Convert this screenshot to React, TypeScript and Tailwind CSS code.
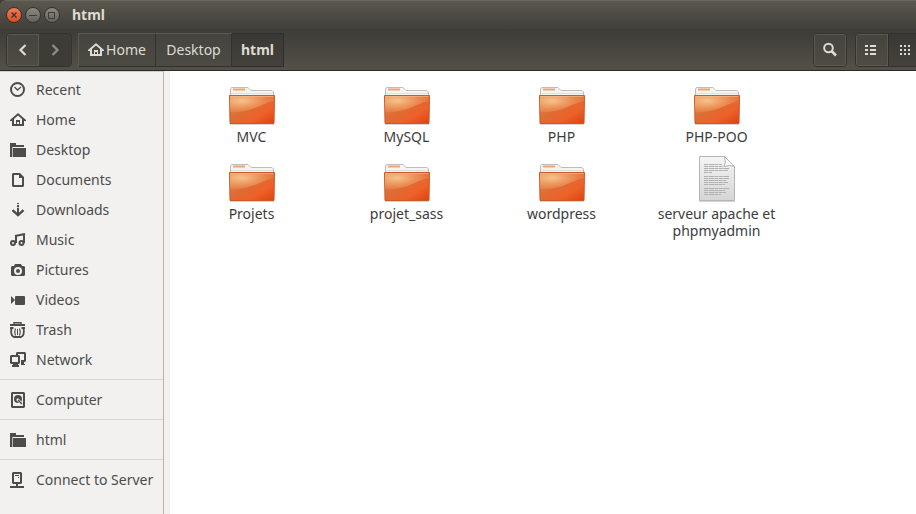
import type { ReactNode } from "react";

function Icon({ children }: { children: ReactNode }) {
  return (
    <svg viewBox="0 0 16 16" className="h-4 w-4 shrink-0" fill="currentColor" aria-hidden="true">
      {children}
    </svg>
  );
}

const homeShape = (
  <path fillRule="evenodd" d="M8 1 0 8v1h2v5h12V9h2V8L8 1Zm0 2.500 4 3.500v5h-2V8H6v4H4V7Zm-1 6.500h2v2H7Z" />
);

const icons = {
  recent: (
    <g fill="none" stroke="currentColor">
      <circle cx="7.500" cy="7.500" r="6.500" strokeWidth="2" />
      <path d="m4.500 5 3 3 3.500-3" strokeWidth="1.300" />
    </g>
  ),
  home: homeShape,
  folder: (
    <>
      <path d="M0 1h6v2h8v2H2v10H0Z" />
      <path d="M3 6h13v9H3Z" />
      <path d="M2 5h1v10H2Z" opacity=".35" />
    </>
  ),
  document: <path fillRule="evenodd" d="M3 1h7l4 4v9l-1 1H3l-1-1V2Zm1 2v10h8V6H9V3Z" />,
  downloads: (
    <>
      <path d="M7 1h2v1H7zM7 3h2v2H7zM7 6h2v7H7z" />
      <path d="M7 5h2v1H7z" opacity=".35" />
      <path d="m2.500 8.200 5.500 5 5.500-5" fill="none" stroke="currentColor" strokeWidth="2.400" />
    </>
  ),
  music: (
    <g fill="none" stroke="currentColor" strokeWidth="2">
      <circle cx="3" cy="11" r="2" />
      <circle cx="11.500" cy="11" r="2" />
      <path d="M6 11V3M14 11V2M5 4l10-2" />
    </g>
  ),
  pictures: (
    <path
      fillRule="evenodd"
      d="M5 2h6l1 2h2l1 1v8l-1 1H2l-1-1V5l1-1h2Zm3 3a4 4 0 1 0 0 8 4 4 0 0 0 0-8Zm0 2a2 2 0 1 1 0 4 2 2 0 0 1 0-4Z"
    />
  ),
  videos: (
    <>
      <path d="M1 4l4 4-4 4Z" />
      <rect x="5" y="4" width="10" height="9" rx="1" />
    </>
  ),
  trash: (
    <g fill="none" stroke="currentColor">
      <path d="M0 3h15" strokeWidth="2" />
      <path d="M4 2V.7h7V2" strokeWidth="1.400" />
      <path d="M1.500 6C1 9 1 14 4 15h7c3-1 3-6 2.500-9M0 6h3.500M11.500 6H15" strokeWidth="1.800" />
      <path d="M5.500 6.500q-1.600 3.500 0 7M9.500 6.500q1.600 3.500 0 7" strokeWidth="1.200" />
      <path d="M7.500 7v6" />
    </g>
  ),
  network: (
    <>
      <path d="M7 0h8l1 1v8l-1 1h-1v2h1v1h-4V8h3V2H8v1H6V1Z" />
      <path fillRule="evenodd" d="M1 3h8l1 1v7l-1 1H8v1h1v2H2v-2h1v-1H1l-1-1V4Zm1 2v5h6V5Z" />
    </>
  ),
  computer: (
    <>
      <path fillRule="evenodd" d="M2 0h12l1 1v14l-1 1H2l-1-1V1Zm1 2v12h10V2Z" />
      <circle cx="8" cy="7" r="4" />
      <path d="m7 7 5 5" stroke="#f2f1f0" strokeWidth="2.500" />
      <path d="m8 8 4 4" stroke="currentColor" strokeWidth="1.500" />
    </>
  ),
  server: (
    <>
      <path fillRule="evenodd" d="M3 0h8l1 1v10l-1 1H8v2h6v2H0v-2h6v-2H3l-1-1V1Zm1 2v8h6V2Z" />
      <path d="M5 3h4v1H5zM8 5h1v1H8z" />
    </>
  ),
};

type Place = { label: string; icon: keyof typeof icons };

const sections: Place[][] = [
  [
    { label: "Recent", icon: "recent" },
    { label: "Home", icon: "home" },
    { label: "Desktop", icon: "folder" },
    { label: "Documents", icon: "document" },
    { label: "Downloads", icon: "downloads" },
    { label: "Music", icon: "music" },
    { label: "Pictures", icon: "pictures" },
    { label: "Videos", icon: "videos" },
    { label: "Trash", icon: "trash" },
    { label: "Network", icon: "network" },
  ],
  [{ label: "Computer", icon: "computer" }],
  [{ label: "html", icon: "folder" }],
  [{ label: "Connect to Server", icon: "server" }],
];

const files = [
  { name: "MVC", folder: true },
  { name: "MySQL", folder: true },
  { name: "PHP", folder: true },
  { name: "PHP-POO", folder: true },
  { name: "Projets", folder: true },
  { name: "projet_sass", folder: true },
  { name: "wordpress", folder: true },
  { name: "serveur apache et phpmyadmin", folder: false },
];

function FolderArt() {
  return (
    <svg viewBox="0 0 48 48" className="h-12 w-12" aria-hidden="true">
      <path d="M2.500 38V11l1-1.500h16.500l3 3h21l1.500 1.500v24Z" fill="#f4f4f3" stroke="#bdbdba" />
      <path d="M5 11.500h12" stroke="#f0a36c" strokeWidth="2" />
      <path d="M3 15.500h42" stroke="#e0e0de" />
      <path d="M1.500 17.500h45l-.5 28H2Z" fill="url(#folder-body)" stroke="#cb5a2a" />
      <path d="M2 18h44v5C34 25 22 36 2 34Z" fill="url(#folder-shine)" />
      <path d="M2.500 18.500h43" stroke="#f7bd93" opacity=".6" />
      <path d="M2 46.500h44" stroke="#777" opacity=".3" />
    </svg>
  );
}

function TextFileArt() {
  return (
    <svg viewBox="0 0 48 48" className="h-12 w-12" aria-hidden="true">
      <path d="M6.500 1.500h25l10 10v34h-35Z" fill="url(#paper)" stroke="#b4b4b4" />
      <path d="M31.500 1.500q2 6-.5 10 6-2 10.500 0Z" fill="#fafafa" stroke="#b2b2b2" />
      <path
        d="M11 9.500h18M11 11.500h19M11 13.500h25M11 15.500h24M11 17.500h8M11 21.500h25M11 23.500h25M11 25.500h22M11 27.500h24M11 29.500h21M11 33.500h25M11 35.500h21M11 37.500h22M11 39.500h17"
        stroke="#b0b0b0"
        strokeDasharray="4 .6 6 .5 3 .6"
      />
      <path d="M6 46.500h36" stroke="#777" opacity=".3" />
    </svg>
  );
}

function ArtGradients() {
  return (
    <svg className="absolute h-0 w-0" aria-hidden="true">
      <defs>
        <linearGradient id="folder-body" x1="0" y1="0" x2="1" y2="1">
          <stop offset="0" stopColor="#dd8a4c" />
          <stop offset=".45" stopColor="#dd6c34" />
          <stop offset=".7" stopColor="#ee6128" />
          <stop offset="1" stopColor="#dc4212" />
        </linearGradient>
        <radialGradient id="folder-shine" cx=".28" cy=".3" r=".75">
          <stop offset="0" stopColor="#ffdca4" stopOpacity=".75" />
          <stop offset="1" stopColor="#ffb27c" stopOpacity=".15" />
        </radialGradient>
        <linearGradient id="paper" x1="0" y1="0" x2="0" y2="1">
          <stop offset="0" stopColor="#f5f5f5" />
          <stop offset="1" stopColor="#d5d5d5" />
        </linearGradient>
      </defs>
    </svg>
  );
}

const windowButton =
  "flex h-4 w-4 items-center justify-center rounded-full border border-[#34332e] text-[#3c3b37]";
const toolGroup = "flex h-[34px] shrink-0 overflow-hidden rounded-[4px] border border-[#33322e]";
const toolButton =
  "flex w-8 items-center justify-center border border-[#5b5a51] bg-linear-to-b from-[#45443e] to-[#4d4b44]";
const crumb =
  "flex items-center border-y border-r border-[#33322e] border-t-[#5b5a51] bg-linear-to-b from-[#45443e] to-[#4b4a43]";

export default function App() {
  return (
    <div className="flex h-screen flex-col overflow-hidden bg-[#3c3b37] font-['Noto_Sans','Open_Sans',sans-serif] text-sm text-[#3c3c3c]">
      <ArtGradients />
      <header className="flex h-[29px] shrink-0 items-center rounded-tl-md border-t border-[#69675d] bg-linear-to-b from-[#5a584e] to-[#403f3a] pl-1.5">
        <div className="flex gap-[3px]">
          <button aria-label="Close" className={`${windowButton} bg-linear-to-b from-[#f47b55] to-[#df4a16]`}>
            <svg viewBox="0 0 8 8" className="h-2 w-2 shrink-0" fill="none" stroke="currentColor" strokeWidth="1.500">
              <path d="m1.500 1.500 5 5m0-5-5 5" />
            </svg>
          </button>
          <button aria-label="Minimize" className={`${windowButton} bg-linear-to-b from-[#8b8981] to-[#65635b]`}>
            <svg viewBox="0 0 8 8" className="h-2 w-2 shrink-0" fill="none" stroke="currentColor">
              <path d="M0 4.500h8" />
            </svg>
          </button>
          <button aria-label="Maximize" className={`${windowButton} bg-linear-to-b from-[#8b8981] to-[#65635b]`}>
            <svg viewBox="0 0 8 8" className="h-2 w-2 shrink-0" fill="none" stroke="currentColor">
              <path d="M.5 1.500h6v6h-6z" />
            </svg>
          </button>
        </div>
        <h1 className="ml-3 text-sm font-bold text-[#dfdbd2]">html</h1>
      </header>

      <div className="flex h-[42px] shrink-0 items-center justify-between overflow-hidden border-b border-[#2c2b27] bg-linear-to-b from-[#3d3c38] to-[#535147] pl-1.5 text-[#dfdbd2]">
        <div className="flex gap-1.5">
          <div className={toolGroup}>
            <button aria-label="Back" className={toolButton}>
              <Icon>
                <path d="M10.500 3 5.500 8l5 5" fill="none" stroke="currentColor" strokeWidth="2.200" />
              </Icon>
            </button>
            <button aria-label="Forward" disabled className="flex w-8 items-center justify-center bg-[#3d3c37] text-[#928f87]">
              <Icon>
                <path d="m5.500 3 5 5-5 5" fill="none" stroke="currentColor" strokeWidth="2.200" />
              </Icon>
            </button>
          </div>
          <nav aria-label="Path" className="flex h-[34px] border-l border-[#5b5a51]">
            <button className={`${crumb} w-[77px] justify-center`}>
              <Icon>{homeShape}</Icon>
              <span className="ml-0.5">Home</span>
            </button>
            <button className={`${crumb} w-[76px] justify-center`}>Desktop</button>
            <button
              aria-current="page"
              className="flex w-[52px] items-center justify-center border border-l-0 border-[#2f2e2a] bg-linear-to-b from-[#393834] to-[#43423c] font-bold"
            >
              html
            </button>
          </nav>
        </div>
        <div className="-mr-[5px] flex shrink-0 gap-2">
          <div className={toolGroup}>
            <button aria-label="Search" className={toolButton}>
              <Icon>
                <g fill="none" stroke="currentColor">
                  <circle cx="6.500" cy="6" r="4.300" strokeWidth="2" />
                  <path d="m9.500 9 4.500 4.500" strokeWidth="2.600" />
                </g>
              </Icon>
            </button>
          </div>
          <div className={toolGroup}>
            <button aria-label="List view" className={toolButton}>
              <Icon>
                <path d="M1 3h3v2H1zM6 3h6v2H6zM1 7h3v2H1zM6 7h6v2H6zM1 11h3v2H1zM6 11h6v2H6z" />
              </Icon>
            </button>
            <button
              aria-label="Icon view"
              aria-pressed="true"
              className="flex w-8 items-center justify-center border-l border-[#2f2e2a] bg-linear-to-b from-[#393834] to-[#43423c]"
            >
              <Icon>
                <path d="M3 3h2v2H3zM7 3h2v2H7zM11 3h2v2h-2zM3 7h2v2H3zM7 7h2v2H7zM11 7h2v2h-2zM3 11h2v2H3zM7 11h2v2H7zM11 11h2v2h-2z" />
              </Icon>
            </button>
          </div>
        </div>
      </div>

      <div className="flex min-h-0 flex-1 bg-[#f2f1f0]">
        <nav
          aria-label="Places"
          className="mr-1.5 w-[164px] shrink-0 overflow-hidden border-t border-r border-t-[#d0cecc] border-r-[#b6b3b0] pt-[3px] text-[#4c4c4c]"
        >
          {sections.map((places, index) => (
            <div key={index}>
              {index > 0 && <hr className="mt-1 mb-[5px] border-t border-[#d9d7d5]" />}
              {places.map((place) => (
                <button
                  key={place.label}
                  className="flex h-[30px] w-full items-center gap-2.5 pl-2.5 whitespace-nowrap"
                >
                  <Icon>{icons[place.icon]}</Icon>
                  {place.label}
                </button>
              ))}
            </div>
          ))}
        </nav>
        <main className="min-w-0 flex-1 overflow-hidden bg-white">
          <ul className="grid grid-cols-[repeat(auto-fill,155px)] gap-y-2.5 pt-[7px] pl-1">
            {files.map((file) => (
              <li key={file.name}>
                <button className="flex w-full flex-col items-center gap-0.5 px-3 leading-[17px]">
                  {file.folder ? <FolderArt /> : <TextFileArt />}
                  <span>{file.name}</span>
                </button>
              </li>
            ))}
          </ul>
        </main>
      </div>
    </div>
  );
}
